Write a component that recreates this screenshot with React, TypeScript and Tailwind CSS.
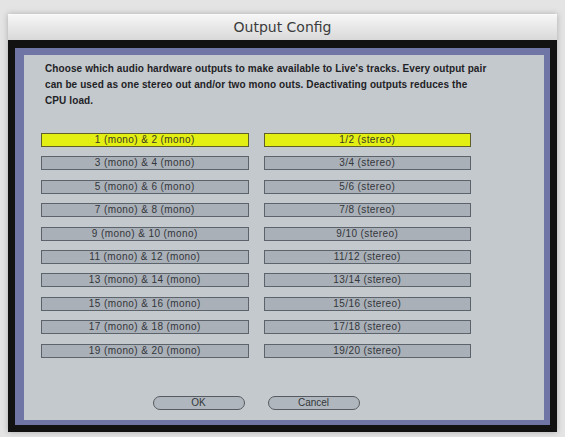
const pairs = [
  ["1 (mono) & 2 (mono)", "1/2 (stereo)"],
  ["3 (mono) & 4 (mono)", "3/4 (stereo)"],
  ["5 (mono) & 6 (mono)", "5/6 (stereo)"],
  ["7 (mono) & 8 (mono)", "7/8 (stereo)"],
  ["9 (mono) & 10 (mono)", "9/10 (stereo)"],
  ["11 (mono) & 12 (mono)", "11/12 (stereo)"],
  ["13 (mono) & 14 (mono)", "13/14 (stereo)"],
  ["15 (mono) & 16 (mono)", "15/16 (stereo)"],
  ["17 (mono) & 18 (mono)", "17/18 (stereo)"],
  ["19 (mono) & 20 (mono)", "19/20 (stereo)"],
]

function OutputToggle({ label, active }: { label: string; active?: boolean }) {
  return (
    <div
      className={
        active
          ? "h-[14px] border border-[#5e5f2a] bg-[#e3ee12] flex items-center justify-center text-[10px] tracking-[0.4px] text-[#3a3a22] leading-none"
          : "h-[14px] border border-[#5d636b] bg-[#aab0b8] flex items-center justify-center text-[10px] tracking-[0.4px] text-[#33363a] leading-none"
      }
    >
      {label}
    </div>
  )
}

function PillButton({ label }: { label: string }) {
  return (
    <div className="w-[92px] h-[14px] rounded-full border border-[#575b61] bg-[#b0b6bd] flex items-center justify-center text-[10px] text-[#33363a] leading-none">
      {label}
    </div>
  )
}

export default function App() {
  return (
    <div
      className="w-[565px] h-[437px] bg-[#e4e4e4] pt-[14px] pl-[8px] overflow-hidden"
      style={{ fontFamily: '"Liberation Sans", Arial, sans-serif' }}
    >
      <div className="w-[549px] shadow-[0_0_6px_rgba(0,0,0,0.25)]">
        {/* title bar */}
        <div className="h-[26px] bg-gradient-to-b from-[#f6f6f6] to-[#d9d9d9] border-t border-[#fafafa] flex items-center justify-center">
          <span
            className="text-[14px] text-[#3c3c3c]"
            style={{ fontFamily: '"DejaVu Sans", sans-serif' }}
          >
            Output Config
          </span>
        </div>

        {/* dialog body */}
        <div className="bg-[#121212] px-[7px] pt-[8px] pb-[7px]">
          <div className="bg-[#6f76a6] pl-[9px] pr-[6px] pt-[7px] pb-[5px]">
            <div className="h-[365px] bg-[#c3c9cd] flex flex-col">
              <p className="pl-[21px] pt-[6px] text-[10px] tracking-[0.1px] font-bold leading-[16px] text-[#1f2226] whitespace-nowrap">
                Choose which audio hardware outputs to make available to Live's tracks. Every output pair
                <br />
                can be used as one stereo out and/or two mono outs. Deactivating outputs reduces the
                <br />
                CPU load.
              </p>

              <div className="mt-[24px] ml-[17px] w-[430px] grid grid-cols-2 gap-x-[15px] gap-y-[9.4px]">
                {pairs.map(([mono, stereo], i) => [
                  <OutputToggle key={mono} label={mono} active={i === 0} />,
                  <OutputToggle key={stereo} label={stereo} active={i === 0} />,
                ])}
              </div>

              <div className="mt-auto mb-[10px] flex justify-center gap-[23px] pl-[6px] pr-[62px]">
                <PillButton label="OK" />
                <PillButton label="Cancel" />
              </div>
            </div>
          </div>
        </div>
      </div>
    </div>
  )
}
